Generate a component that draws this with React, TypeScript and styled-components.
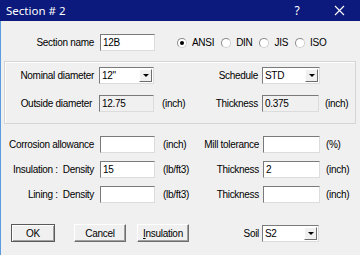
import React from "react";
import styled, { createGlobalStyle } from "styled-components";

const GlobalStyle = createGlobalStyle`
  html, body {
    margin: 0;
    padding: 0;
    background: #f0f0f0;
  }
  body {
    width: 360px;
    height: 255px;
    overflow: hidden;
  }
`;

const Window = styled.div`
  width: 360px;
  height: 255px;
  box-sizing: border-box;
  background: #f0f0f0;
  border-left: 1px solid #5b9be0;
  display: flex;
  flex-direction: column;
  font-family: "Liberation Sans", Arial, sans-serif;
  font-size: 10px;
  letter-spacing: -0.3px;
  color: #000;
`;

const TitleBar = styled.div`
  height: 21px;
  margin-left: -1px;
  padding-left: 6px;
  background: #0b1a7c;
  color: #fff;
  display: flex;
  align-items: center;
  font-family: "Noto Sans", "Liberation Sans", sans-serif;
  font-size: 11.5px;
  letter-spacing: 0;
`;

const Title = styled.span`
  flex: 1;
`;

const TitleButton = styled.div`
  width: 42px;
  height: 21px;
  display: flex;
  align-items: center;
  justify-content: center;
  font-size: 12px;
`;

const Body = styled.div`
  flex: 1;
  padding-top: 13px;
  display: flex;
  flex-direction: column;
`;

const TopRow = styled.div`
  display: flex;
  align-items: center;
  height: 17px;
`;

const Label = styled.span<{ $w: number; $pad?: number }>`
  width: ${(p) => p.$w}px;
  padding-right: ${(p) => p.$pad ?? 5}px;
  box-sizing: border-box;
  display: flex;
  justify-content: flex-end;
  white-space: nowrap;
`;

const Unit = styled.span<{ $pad?: number }>`
  padding-left: ${(p) => p.$pad ?? 7}px;
  white-space: nowrap;
`;

const Field = styled.div<{ $w: number; $readOnly?: boolean }>`
  width: ${(p) => p.$w}px;
  height: 17px;
  box-sizing: border-box;
  border: 1px solid;
  border-color: #7a7a7a #dcdcdc #dcdcdc #7a7a7a;
  background: ${(p) => (p.$readOnly ? "#f0f0f0" : "#fff")};
  padding-left: 2px;
  display: flex;
  align-items: center;
  white-space: nowrap;
  overflow: hidden;
`;

const SelectBox = styled(Field)`
  padding-right: 1px;
  justify-content: space-between;
`;

const DropButton = styled.span`
  width: 13px;
  height: 13px;
  box-sizing: border-box;
  background: #f0f0f0;
  border: 1px solid;
  border-color: #fff #6e6e6e #6e6e6e #fff;
  display: flex;
  align-items: center;
  justify-content: center;
  &::after {
    content: "";
    border-left: 3px solid transparent;
    border-right: 3px solid transparent;
    border-top: 3px solid #000;
  }
`;

const Radios = styled.div`
  display: flex;
  align-items: center;
  margin-left: 22px;
  gap: 7px;
`;

const RadioItem = styled.label`
  display: flex;
  align-items: center;
  gap: 5px;
`;

const RadioDot = styled.span<{ $on?: boolean }>`
  width: 10px;
  height: 10px;
  box-sizing: border-box;
  border-radius: 50%;
  border: 1px solid;
  border-color: #8a8a8a #d0d0d0 #d0d0d0 #8a8a8a;
  background: #fff;
  display: flex;
  align-items: center;
  justify-content: center;
  &::after {
    content: "";
    display: ${(p) => (p.$on ? "block" : "none")};
    width: 4px;
    height: 4px;
    border-radius: 50%;
    background: #000;
  }
`;

const GroupBox = styled.div`
  margin: 10px 4px 0 3px;
  border: 1px solid #d5d5d5;
  box-shadow: inset 1px 1px #fff;
  padding: 5px 0 11px;
  display: flex;
  flex-direction: column;
  gap: 11px;
`;

const Rows = styled.div`
  margin-top: 12px;
  display: flex;
  flex-direction: column;
  gap: 8px;
`;

const Row = styled.div<{ $first: number }>`
  display: grid;
  grid-template-columns: ${(p) => p.$first}px 56px 45px 62px 57px auto;
  align-items: center;
  height: 17px;
`;

const Footer = styled.div`
  margin-top: 21px;
  display: grid;
  grid-template-columns: 10px 44px 19px 52px 11px 52px 73px 57px;
  align-items: center;
  height: 18px;
`;

const Button = styled.div<{ $default?: boolean }>`
  height: 18px;
  box-sizing: border-box;
  border: 1px solid;
  border-color: ${(p) =>
    p.$default ? "#5a5a5a" : "#fff #6e6e6e #6e6e6e #fff"};
  box-shadow: ${(p) =>
    p.$default ? "inset 1px 1px #fff, inset -1px -1px #a0a0a0" : "inset -1px -1px #a0a0a0"};
  background: #f0f0f0;
  display: flex;
  align-items: center;
  justify-content: center;
  u {
    text-decoration: underline;
  }
`;

function Select({ value, w }: { value: string; w: number }) {
  return (
    <SelectBox $w={w}>
      <span>{value}</span>
      <DropButton />
    </SelectBox>
  );
}

function CloseIcon() {
  return (
    <svg width="11" height="11" viewBox="0 0 11 11">
      <path d="M1 1 L10 10 M10 1 L1 10" stroke="#fff" strokeWidth="1.1" />
    </svg>
  );
}

export default function App() {
  return (
    <>
      <GlobalStyle />
      <Window>
        <TitleBar>
          <Title>Section # 2</Title>
          <TitleButton>?</TitleButton>
          <TitleButton>
            <CloseIcon />
          </TitleButton>
        </TitleBar>
        <Body>
          <TopRow>
            <Label $w={99} $pad={6}>Section name</Label>
            <Field $w={55}>12B</Field>
            <Radios>
              <RadioItem>
                <RadioDot $on />
                ANSI
              </RadioItem>
              <RadioItem>
                <RadioDot />
                DIN
              </RadioItem>
              <RadioItem>
                <RadioDot />
                JIS
              </RadioItem>
              <RadioItem>
                <RadioDot />
                ISO
              </RadioItem>
            </Radios>
          </TopRow>

          <GroupBox>
            <Row $first={94}>
              <Label $w={94}>Nominal diameter</Label>
              <Select value={'12"'} w={55} />
              <span />
              <Label $w={62} $pad={4}>Schedule</Label>
              <Select value="STD" w={58} />
              <span />
            </Row>
            <Row $first={94}>
              <Label $w={94} $pad={7}>Outside diameter</Label>
              <Field $w={55} $readOnly>12.75</Field>
              <Unit>(inch)</Unit>
              <Label $w={62} $pad={4}>Thickness</Label>
              <Field $w={57} $readOnly>0.375</Field>
              <Unit $pad={6}>(inch)</Unit>
            </Row>
          </GroupBox>

          <Rows>
            <Row $first={99}>
              <Label $w={99} $pad={6}>Corrosion allowance</Label>
              <Field $w={55} />
              <Unit>(inch)</Unit>
              <Label $w={62} $pad={4}>Mill tolerance</Label>
              <Field $w={57} />
              <Unit $pad={6}>(%)</Unit>
            </Row>
            <Row $first={99}>
              <Label $w={99} $pad={6}>Insulation :&nbsp; Density</Label>
              <Field $w={55}>15</Field>
              <Unit>(lb/ft3)</Unit>
              <Label $w={62} $pad={4}>Thickness</Label>
              <Field $w={57}>2</Field>
              <Unit $pad={6}>(inch)</Unit>
            </Row>
            <Row $first={99}>
              <Label $w={99} $pad={6}>Lining :&nbsp; Density</Label>
              <Field $w={55} />
              <Unit>(lb/ft3)</Unit>
              <Label $w={62} $pad={4}>Thickness</Label>
              <Field $w={57} />
              <Unit $pad={6}>(inch)</Unit>
            </Row>
          </Rows>

          <Footer>
            <span />
            <Button $default>OK</Button>
            <span />
            <Button>Cancel</Button>
            <span />
            <Button>
              <span>
                <u>I</u>nsulation
              </span>
            </Button>
            <Label $w={73} $pad={3}>Soil</Label>
            <Select value="S2" w={57} />
          </Footer>
        </Body>
      </Window>
    </>
  );
}
